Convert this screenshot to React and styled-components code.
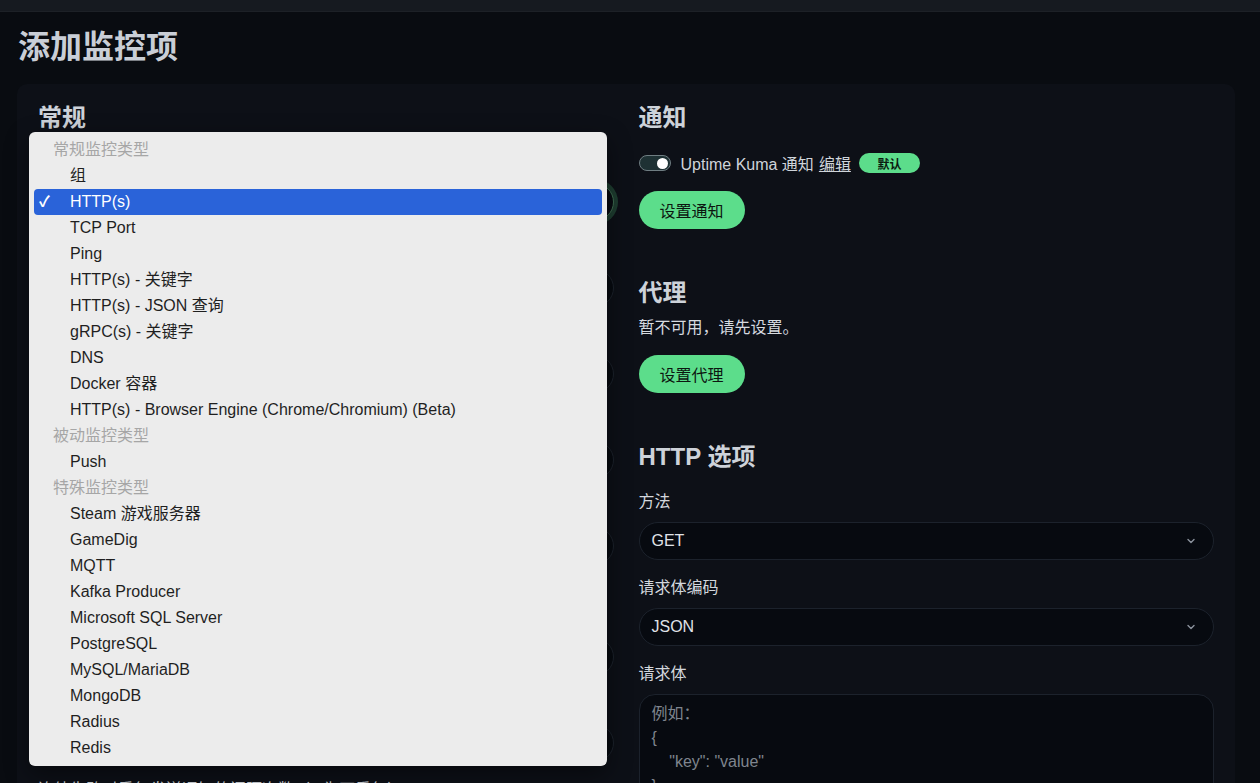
import React from "react";
import styled, { createGlobalStyle, css } from "styled-components";

const FONT = `"Liberation Sans", "Noto Sans CJK SC", sans-serif`;
const GREEN = "#5cdd8b";

const monitorTypes = [
  { group: "常规监控类型" },
  { label: "组" },
  { label: "HTTP(s)", selected: true },
  { label: "TCP Port" },
  { label: "Ping" },
  { label: "HTTP(s) - 关键字" },
  { label: "HTTP(s) - JSON 查询" },
  { label: "gRPC(s) - 关键字" },
  { label: "DNS" },
  { label: "Docker 容器" },
  { label: "HTTP(s) - Browser Engine (Chrome/Chromium) (Beta)" },
  { group: "被动监控类型" },
  { label: "Push" },
  { group: "特殊监控类型" },
  { label: "Steam 游戏服务器" },
  { label: "GameDig" },
  { label: "MQTT" },
  { label: "Kafka Producer" },
  { label: "Microsoft SQL Server" },
  { label: "PostgreSQL" },
  { label: "MySQL/MariaDB" },
  { label: "MongoDB" },
  { label: "Radius" },
  { label: "Redis" },
];

function Chevron() {
  return (
    <svg width="12" height="12" viewBox="0 0 12 12" fill="none">
      <path d="M3 4.5l3 3 3-3" stroke="#8b929c" strokeWidth="1.4" strokeLinecap="round" strokeLinejoin="round" />
    </svg>
  );
}

function SelectBox({ value, focused }) {
  return (
    <Select $focused={focused}>
      <span>{value}</span>
      <Chevron />
    </Select>
  );
}

function App() {
  return (
    <>
      <GlobalStyle />
      <TopBar />
      <Page>
        <Title>添加监控项</Title>
        <Card>
          <Column>
            <SectionTitle>常规</SectionTitle>
            <Field>
              <Label>监控类型</Label>
              <SelectBox value="HTTP(s)" focused />
            </Field>
            <Field>
              <Label>显示名称</Label>
              <Input />
            </Field>
            <Field>
              <Label>URL</Label>
              <Input>https://</Input>
            </Field>
            <Field>
              <Label>心跳间隔（检查周期，单位为秒）</Label>
              <Input>60</Input>
            </Field>
            <Field>
              <Label>重试次数</Label>
              <Input>0</Input>
              <Help>服务被标记为离线并发送通知前的最大重试次数</Help>
            </Field>
            <Field>
              <Label>心跳重试间隔（秒）</Label>
              <Input>60</Input>
            </Field>
            <Field>
              <Label>请求超时（秒）</Label>
              <Input>48</Input>
            </Field>
            <Field>
              <Label>连续失败时重复发送通知的间隔次数（0 为不重复）</Label>
              <Input>0</Input>
            </Field>

            <Menu>
              {monitorTypes.map((item, i) =>
                item.group ? (
                  <MenuGroup key={i}>{item.group}</MenuGroup>
                ) : (
                  <MenuItem key={i} $selected={item.selected}>
                    {item.selected && <Check>✓</Check>}
                    {item.label}
                  </MenuItem>
                )
              )}
            </Menu>
          </Column>

          <Column>
            <SectionTitle>通知</SectionTitle>
            <NotifyRow>
              <Switch />
              <span>Uptime Kuma 通知</span>
              <EditLink>编辑</EditLink>
              <Badge>默认</Badge>
            </NotifyRow>
            <Button>设置通知</Button>

            <SectionTitle $spaced>代理</SectionTitle>
            <Text>暂不可用，请先设置。</Text>
            <Button>设置代理</Button>

            <SectionTitle $spaced>HTTP 选项</SectionTitle>
            <Field>
              <Label>方法</Label>
              <SelectBox value="GET" />
            </Field>
            <Field>
              <Label>请求体编码</Label>
              <SelectBox value="JSON" />
            </Field>
            <Field>
              <Label>请求体</Label>
              <TextArea
                rows={6}
                placeholder={'例如：\n{\n    "key": "value"\n}'}
              />
            </Field>
          </Column>
        </Card>
      </Page>
    </>
  );
}

export default App;

const GlobalStyle = createGlobalStyle`
  html, body {
    margin: 0;
    background: #090c11;
    overflow: hidden;
  }
  body {
    font-family: ${FONT};
    color: #d3d7dd;
  }
  * {
    box-sizing: border-box;
  }
`;

const TopBar = styled.div`
  height: 12px;
  background: #161a20;
  border-bottom: 1px solid #1d2127;
`;

const Page = styled.div`
  padding: 17px 25px 0 17px;
`;

const Title = styled.h1`
  margin: 0 0 19px 1px;
  font-size: 32px;
  line-height: 36px;
  font-weight: 700;
  color: #c9ced6;
`;

const Card = styled.div`
  display: grid;
  grid-template-columns: 1fr 1fr;
  gap: 25px;
  padding: 19px 21px 0;
  background: #0d1017;
  border-radius: 10px;
  height: 760px;
`;

const Column = styled.div`
  position: relative;
  display: flex;
  flex-direction: column;
  align-items: flex-start;
`;

const SectionTitle = styled.h2`
  margin: ${(p) => (p.$spaced ? "49px" : "0")} 0 19px;
  font-size: 24px;
  line-height: 29px;
  font-weight: 700;
  color: #cdd2d9;
`;

const Field = styled.div`
  width: 100%;
  margin-bottom: 16px;
`;

const Label = styled.div`
  font-size: 16px;
  line-height: 24px;
  color: #d3d7dd;
  margin-bottom: 8px;
`;

const Help = styled.div`
  margin-top: 4px;
  font-size: 14px;
  line-height: 21px;
  color: #8a9099;
`;

const controlBase = css`
  width: 100%;
  height: 38px;
  border-radius: 19px;
  background: #070a10;
  border: 1px solid #1c222c;
  color: #e0e3e8;
  font-size: 16px;
  font-family: ${FONT};
  padding: 0 12px;
  display: flex;
  align-items: center;
`;

const Input = styled.div`
  ${controlBase}
`;

const Select = styled.div`
  ${controlBase}
  justify-content: space-between;
  padding-right: 16px;

  ${(p) =>
    p.$focused &&
    css`
      border-color: #3f6e52;
      box-shadow: 0 0 0 4px rgba(92, 221, 139, 0.22);
    `}
`;

const TextArea = styled.textarea`
  ${controlBase}
  display: block;
  height: 140px;
  resize: none;
  padding: 7px 12px;
  line-height: 24px;
  border-radius: 16px;
  outline: none;

  &::placeholder {
    color: #7f858e;
  }
`;

const Menu = styled.div`
  position: absolute;
  top: 29px;
  left: -9px;
  width: 578px;
  padding: 5px 0 5px;
  background: #ececec;
  border-radius: 6px;
  box-shadow: 0 8px 24px rgba(0, 0, 0, 0.45);
  z-index: 10;
`;

const MenuGroup = styled.div`
  height: 26px;
  line-height: 26px;
  padding-left: 24px;
  font-size: 16px;
  color: #a6a6a6;
`;

const MenuItem = styled.div`
  position: relative;
  height: 26px;
  line-height: 26px;
  padding-left: 41px;
  font-size: 16px;
  color: #1f1f1f;

  ${(p) =>
    p.$selected &&
    css`
      margin: 0 5px;
      padding-left: 36px;
      background: #2a63d9;
      color: #fff;
      border-radius: 4px;
    `}
`;

const Check = styled.span`
  position: absolute;
  left: 5px;
  top: 0;
  font-size: 15px;
  font-weight: 700;
  color: #fff;
`;

const NotifyRow = styled.div`
  display: flex;
  align-items: center;
  gap: 8px;
  height: 24px;
  font-size: 16px;
  color: #cfd4da;
`;

const Switch = styled.span`
  position: relative;
  width: 32px;
  height: 16px;
  margin-right: 2px;
  border-radius: 8px;
  background: #1e3134;
  border: 1px solid #6f7d82;

  &::after {
    content: "";
    position: absolute;
    right: 2px;
    top: 1.5px;
    width: 11px;
    height: 11px;
    border-radius: 50%;
    background: #fff;
  }
`;

const EditLink = styled.span`
  text-decoration: underline;
  margin-left: -3px;
`;

const Badge = styled.span`
  height: 20px;
  width: 61px;
  display: inline-flex;
  align-items: center;
  justify-content: center;
  border-radius: 10px;
  background: ${GREEN};
  color: #0b1a10;
  font-size: 12px;
  font-weight: 700;
`;

const Button = styled.button`
  margin-top: 16px;
  height: 38px;
  padding: 0 21px;
  border: none;
  border-radius: 19px;
  background: ${GREEN};
  color: #0c1610;
  font-family: ${FONT};
  font-size: 16px;
  cursor: pointer;
`;

const Text = styled.div`
  margin-top: -10px;
  margin-bottom: -1px;
  font-size: 16px;
  line-height: 24px;
  color: #d7dbe0;
`;
